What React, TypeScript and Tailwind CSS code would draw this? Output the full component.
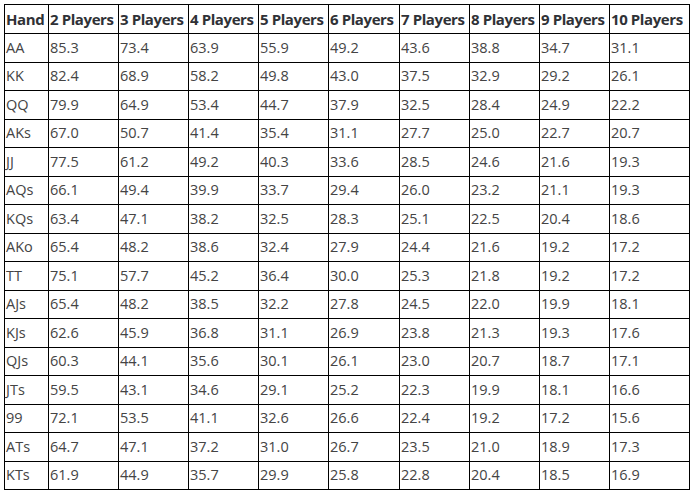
import React from 'react';

const headers = ['Hand', '2 Players', '3 Players', '4 Players', '5 Players', '6 Players', '7 Players', '8 Players', '9 Players', '10 Players'];

const colWidths = ['w-[44px]', 'w-[70px]', 'w-[70px]', 'w-[70px]', 'w-[70px]', 'w-[71px]', 'w-[70px]', 'w-[70px]', 'w-[70px]', 'w-[80px]'];

const rows: string[][] = [
  ['AA', '85.3', '73.4', '63.9', '55.9', '49.2', '43.6', '38.8', '34.7', '31.1'],
  ['KK', '82.4', '68.9', '58.2', '49.8', '43.0', '37.5', '32.9', '29.2', '26.1'],
  ['QQ', '79.9', '64.9', '53.4', '44.7', '37.9', '32.5', '28.4', '24.9', '22.2'],
  ['AKs', '67.0', '50.7', '41.4', '35.4', '31.1', '27.7', '25.0', '22.7', '20.7'],
  ['JJ', '77.5', '61.2', '49.2', '40.3', '33.6', '28.5', '24.6', '21.6', '19.3'],
  ['AQs', '66.1', '49.4', '39.9', '33.7', '29.4', '26.0', '23.2', '21.1', '19.3'],
  ['KQs', '63.4', '47.1', '38.2', '32.5', '28.3', '25.1', '22.5', '20.4', '18.6'],
  ['AKo', '65.4', '48.2', '38.6', '32.4', '27.9', '24.4', '21.6', '19.2', '17.2'],
  ['TT', '75.1', '57.7', '45.2', '36.4', '30.0', '25.3', '21.8', '19.2', '17.2'],
  ['AJs', '65.4', '48.2', '38.5', '32.2', '27.8', '24.5', '22.0', '19.9', '18.1'],
  ['KJs', '62.6', '45.9', '36.8', '31.1', '26.9', '23.8', '21.3', '19.3', '17.6'],
  ['QJs', '60.3', '44.1', '35.6', '30.1', '26.1', '23.0', '20.7', '18.7', '17.1'],
  ['JTs', '59.5', '43.1', '34.6', '29.1', '25.2', '22.3', '19.9', '18.1', '16.6'],
  ['99', '72.1', '53.5', '41.1', '32.6', '26.6', '22.4', '19.2', '17.2', '15.6'],
  ['ATs', '64.7', '47.1', '37.2', '31.0', '26.7', '23.5', '21.0', '18.9', '17.3'],
  ['KTs', '61.9', '44.9', '35.7', '29.9', '25.8', '22.8', '20.4', '18.5', '16.9'],
];

export default function App() {
  return (
    <div className="w-[694px] h-[495px] bg-white pt-[4px] pl-[4px] font-['Open_Sans','Liberation_Sans',sans-serif]">
      <table className="table-fixed border-collapse border border-black w-[685px]">
        <thead>
          <tr className="h-[29px]">
            {headers.map((h, i) => (
              <th
                key={h}
                className={`${colWidths[i]} border border-black px-0 pl-[1px] text-left align-middle text-[15px] font-bold text-[#2f3136] whitespace-nowrap tracking-[-0.4px]`}
              >
                {h}
              </th>
            ))}
          </tr>
        </thead>
        <tbody>
          {rows.map(row => (
            <tr key={row[0]} className="h-[28.5px]">
              {row.map((cell, i) => (
                <td key={i} className="border border-black pl-[1px] py-0 text-left align-middle text-[14.5px] text-[#444]">
                  {cell}
                </td>
              ))}
            </tr>
          ))}
        </tbody>
      </table>
    </div>
  );
}
